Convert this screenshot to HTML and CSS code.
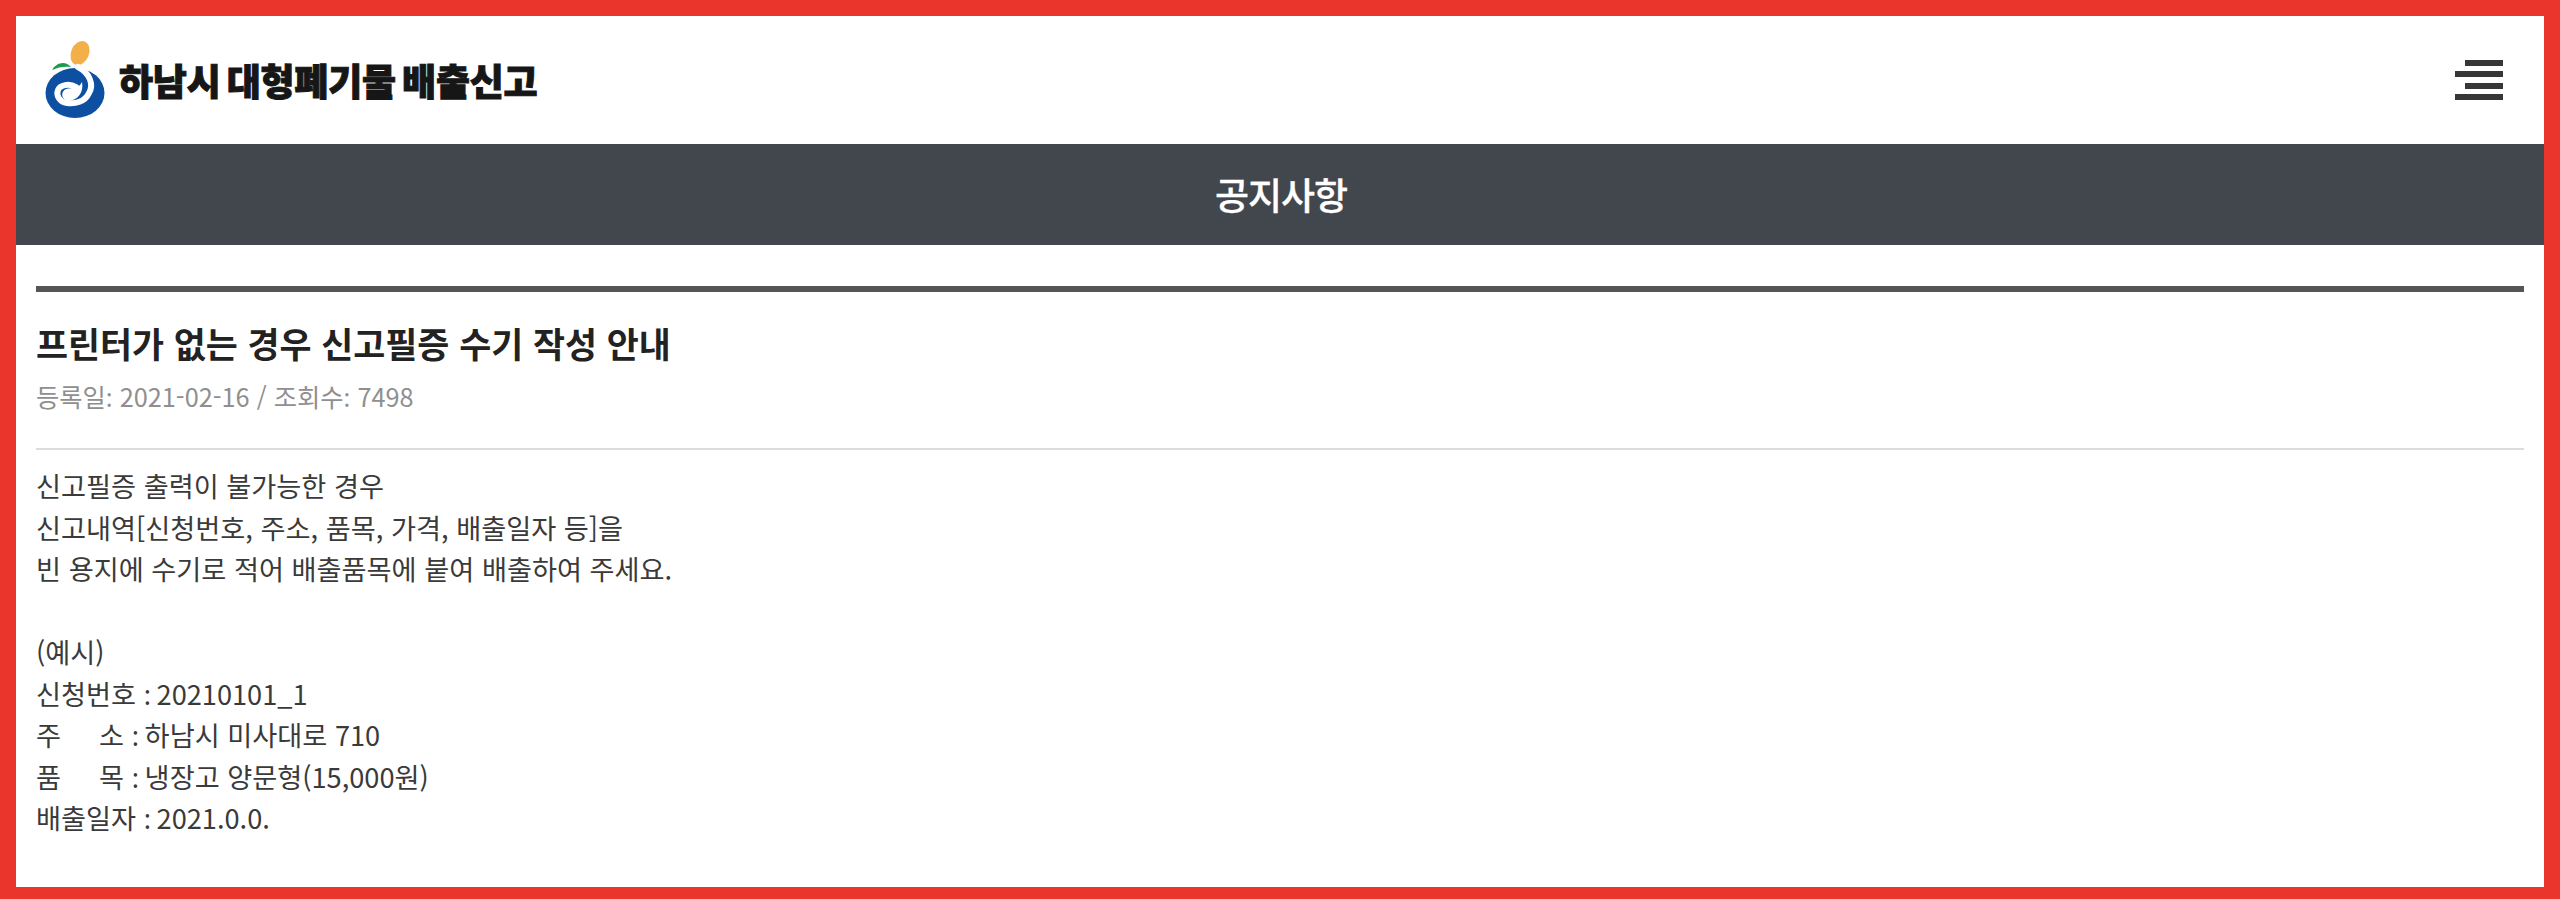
FILE: index.html
```html
<!DOCTYPE html>
<html lang="ko">
<head>
<meta charset="utf-8">
<title>공지사항</title>
<link rel="stylesheet" href="styles.css">
</head>
<body>
<div class="frame">
  <header class="top">
    <a class="brand">
      <svg class="logo" viewBox="0 0 60 80" width="60" height="80" aria-hidden="true">
        <ellipse cx="35" cy="13" rx="9" ry="12.5" transform="rotate(22 35 13)" fill="#f3b04a"/>
        <path d="M7 30 C11 23 20 20 26 27 C20 26 13 27 7 30Z" fill="#1d9a4e"/>
        <ellipse cx="30" cy="53" rx="29.5" ry="25" fill="#0d4fa0"/>
        <path d="M33 27 C45 33 49 45 44 53 C40 62 30 64 22 63 C14 62 11 55 13 50 C15 45 24 43 31 47" fill="none" stroke="#fff" stroke-width="6" stroke-linecap="round"/>
        <path d="M37 42 C39 52 33 60 24 61 C16 60 15 52 21 49 C27 47 33 50 37 42Z" fill="#fff"/>
      </svg>
      <span class="brand-name">하남시 대형폐기물 배출신고</span>
    </a>
    <button class="menu" type="button" aria-label="메뉴">
      <span class="bar short"></span>
      <span class="bar"></span>
      <span class="bar short"></span>
      <span class="bar"></span>
    </button>
  </header>
  <h1 class="page-title">공지사항</h1>
  <main class="content">
    <section class="notice">
      <h2 class="notice-title">프린터가 없는 경우 신고필증 수기 작성 안내</h2>
      <p class="meta">등록일<span class="colon">:</span> 2021-02-16 / 조회수<span class="colon">:</span> 7498</p>
    </section>
    <div class="body-text">
      <p>신고필증 출력이 불가능한 경우</p>
      <p>신고내역[신청번호, 주소, 품목, 가격, 배출일자 등]을</p>
      <p>빈 용지에 수기로 적어 배출품목에 붙여 배출하여 주세요.</p>
      <p>&nbsp;</p>
      <p>(예시)</p>
      <p>신청번호 <span class="colon tight">:</span> 20210101_1</p>
      <p>주 &nbsp; &nbsp; 소 <span class="colon tight">:</span> 하남시 미사대로 710</p>
      <p>품 &nbsp; &nbsp; 목 <span class="colon tight">:</span> 냉장고 양문형(15,000원)</p>
      <p>배출일자 <span class="colon tight">:</span> 2021.0.0.</p>
    </div>
  </main>
</div>
</body>
</html>
```
FILE: styles.css
```css
* { box-sizing: border-box; }
html, body { margin: 0; padding: 0; height: 100%; }
body {
  font-family: "Noto Sans CJK KR", "Noto Sans", sans-serif;
  color: #333;
  background: #fff;
  overflow: hidden;
}
.frame {
  height: 899px;
  border-style: solid;
  border-color: #e9352c;
  border-width: 16px 16px 12px 16px;
  background: #fff;
  overflow: hidden;
}
.top {
  height: 128px;
  padding: 0 41px 0 29px;
  display: flex;
  align-items: center;
  justify-content: space-between;
}
.brand { display: flex; align-items: flex-start; gap: 14px; height: 80px; }
.logo { display: block; width: 60px; height: 80px; overflow: visible; }
.brand-name {
  font-size: 37px;
  font-weight: 900;
  line-height: 80px;
  word-spacing: -4px;
  letter-spacing: -0.2px;
  -webkit-text-stroke: 1px #161616;
  color: #161616;
  white-space: nowrap;
}
.menu {
  width: 48px;
  height: 40px;
  padding: 0;
  border: 0;
  background: none;
  display: flex;
  flex-direction: column;
  align-items: flex-end;
  justify-content: space-between;
}
.bar { display: block; width: 48px; height: 6px; background: #373737; }
.bar.short { width: 38px; }
.page-title {
  margin: 0;
  height: 101px;
  padding-left: 2px;
  background: #42474e;
  color: #fff;
  font-size: 37px;
  font-weight: 500;
  line-height: 100px;
  text-align: center;
  letter-spacing: -1px;
  -webkit-text-stroke: 0.3px #fff;
}
.content { padding: 41px 20px 0; }
.notice {
  border-top: 6px solid #555;
  border-bottom: 2px solid #dcdcdc;
  height: 164px;
  padding-top: 25px;
}
.notice-title {
  margin: 0;
  font-size: 34.8px;
  font-weight: 700;
  line-height: 52px;
  color: #222;
}
.meta {
  margin: 8px 0 0;
  font-size: 25.3px;
  line-height: 38px;
  color: #8f8f8f;
}
.colon { font-family: "Noto Sans", sans-serif; line-height: 0; }
.colon.tight { letter-spacing: -2px; }
.body-text { padding-top: 15px; }
.body-text p {
  margin: 0;
  font-size: 27.2px;
  line-height: 41.5px;
  color: #3a3a3a;
}
```
